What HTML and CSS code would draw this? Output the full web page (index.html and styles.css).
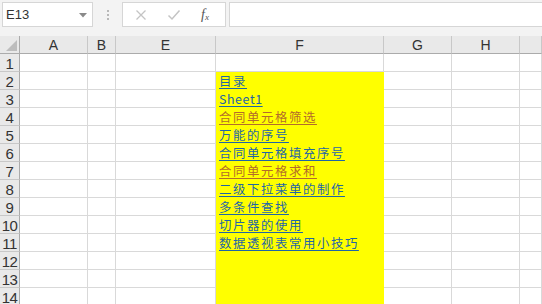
FILE: index.html
```html
<!DOCTYPE html>
<html lang="zh">
<head>
<meta charset="utf-8">
<link rel="stylesheet" href="styles.css">
</head>
<body>
<div class="app">
  <div class="toolbar">
    <div class="namebox">
      <span class="name">E13</span>
      <svg class="dd" width="8" height="5" viewBox="0 0 8 5"><path d="M0 0h8L4 4.5z" fill="#8a8a8a"/></svg>
    </div>
    <div class="grip"><i></i><i></i><i></i></div>
    <div class="fbtns">
      <svg class="fb" width="12" height="12" viewBox="0 0 12 12"><path d="M1.5 1.5l9 9M10.5 1.5l-9 9" stroke="#c4c4c4" stroke-width="1.3" fill="none"/></svg>
      <svg class="fb" width="14" height="12" viewBox="0 0 14 12"><path d="M1.5 6.5l3.5 3.5L12.5 1.5" stroke="#c4c4c4" stroke-width="1.5" fill="none"/></svg>
      <span class="fx">f<sub>x</sub></span>
    </div>
    <div class="finput"></div>
  </div>
  <div class="sheet">
    <div class="corner"><svg width="11" height="11" viewBox="0 0 11 11"><path d="M11 0V11H0z" fill="#bdbdbd"/></svg></div>
    <div class="ch">A</div><div class="ch">B</div><div class="ch">E</div><div class="ch">F</div><div class="ch">G</div><div class="ch">H</div><div class="ch"></div>

    <div class="rh">1</div><div class="c"></div><div class="c"></div><div class="c"></div><div class="c"></div><div class="c"></div><div class="c"></div><div class="c"></div>
    <div class="rh">2</div><div class="c"></div><div class="c"></div><div class="c"></div><div class="c y"><a class="lk">目录</a></div><div class="c"></div><div class="c"></div><div class="c"></div>
    <div class="rh">3</div><div class="c"></div><div class="c"></div><div class="c"></div><div class="c y"><a class="lk en">Sheet1</a></div><div class="c"></div><div class="c"></div><div class="c"></div>
    <div class="rh">4</div><div class="c"></div><div class="c"></div><div class="c"></div><div class="c y"><a class="lk v">合同单元格筛选</a></div><div class="c"></div><div class="c"></div><div class="c"></div>
    <div class="rh">5</div><div class="c"></div><div class="c"></div><div class="c"></div><div class="c y"><a class="lk">万能的序号</a></div><div class="c"></div><div class="c"></div><div class="c"></div>
    <div class="rh">6</div><div class="c"></div><div class="c"></div><div class="c"></div><div class="c y"><a class="lk">合同单元格填充序号</a></div><div class="c"></div><div class="c"></div><div class="c"></div>
    <div class="rh">7</div><div class="c"></div><div class="c"></div><div class="c"></div><div class="c y"><a class="lk v">合同单元格求和</a></div><div class="c"></div><div class="c"></div><div class="c"></div>
    <div class="rh">8</div><div class="c"></div><div class="c"></div><div class="c"></div><div class="c y"><a class="lk">二级下拉菜单的制作</a></div><div class="c"></div><div class="c"></div><div class="c"></div>
    <div class="rh">9</div><div class="c"></div><div class="c"></div><div class="c"></div><div class="c y"><a class="lk">多条件查找</a></div><div class="c"></div><div class="c"></div><div class="c"></div>
    <div class="rh">10</div><div class="c"></div><div class="c"></div><div class="c"></div><div class="c y"><a class="lk">切片器的使用</a></div><div class="c"></div><div class="c"></div><div class="c"></div>
    <div class="rh">11</div><div class="c"></div><div class="c"></div><div class="c"></div><div class="c y"><a class="lk">数据透视表常用小技巧</a></div><div class="c"></div><div class="c"></div><div class="c"></div>
    <div class="rh">12</div><div class="c"></div><div class="c"></div><div class="c"></div><div class="c y"></div><div class="c"></div><div class="c"></div><div class="c"></div>
    <div class="rh">13</div><div class="c"></div><div class="c"></div><div class="c"></div><div class="c y"></div><div class="c"></div><div class="c"></div><div class="c"></div>
    <div class="rh">14</div><div class="c"></div><div class="c"></div><div class="c"></div><div class="c y"></div><div class="c"></div><div class="c"></div><div class="c"></div>
  </div>
</div>
</body>
</html>
```

FILE: styles.css
```css
* { box-sizing: border-box; }
html, body { margin: 0; padding: 0; background: #ffffff; }
body { width: 542px; height: 304px; overflow: hidden; font-family: "Liberation Sans", "Noto Sans CJK SC", sans-serif; }
.app { width: 542px; height: 304px; overflow: hidden; background: #f3f3f3; }

.toolbar { height: 36px; display: flex; align-items: flex-start; padding-top: 2px; }
.namebox { margin-left: 2px; width: 91px; height: 25px; background: #fff; border: 1px solid #d6d6d6; display: flex; align-items: center; justify-content: space-between; padding: 0 5px 0 3px; }
.name { font-size: 13px; color: #333; }
.dd { margin-top: 1px; }
.grip { width: 29px; height: 25px; display: flex; flex-direction: column; align-items: center; justify-content: center; gap: 2px; }
.grip i { display: block; width: 2px; height: 2px; background: #b8b8b8; }
.fbtns { width: 104px; height: 25px; background: #fff; border: 1px solid #d6d6d6; display: flex; align-items: center; padding-left: 12px; }
.fbtns .fb:nth-child(1) { margin-right: 20px; }
.fbtns .fb:nth-child(2) { margin-right: 20px; }
.fx { font-family: "Liberation Serif", serif; font-style: italic; font-size: 14px; color: #555; line-height: 1; }
.fx sub { font-size: 9px; vertical-align: -1px; }
.finput { flex: 1; height: 25px; margin-left: 3px; background: #fff; border: 1px solid #d6d6d6; border-right: none; }

.sheet { display: grid; grid-template-columns: 20px 68px 28px 100px 168px 68px 68px 1fr; grid-auto-rows: 18px; background: #fff; }
.corner { background: #e9e9e9; border-right: 1px solid #ababab; border-bottom: 1px solid #ababab; display: flex; align-items: flex-end; justify-content: flex-end; padding: 0 2px 2px 0; }
.ch { background: #e9e9e9; border-right: 1px solid #c8c8c8; border-bottom: 1px solid #ababab; font-size: 14px; color: #333; display: flex; align-items: center; justify-content: center; line-height: 1; padding-top: 1px; }
.rh { background: #e9e9e9; border-right: 1px solid #ababab; border-bottom: 1px solid #c8c8c8; font-size: 15px; color: #333; display: flex; align-items: center; justify-content: center; line-height: 1; padding-top: 1px; letter-spacing: -0.5px; }
.c { border-right: 1px solid #d9d9d9; border-bottom: 1px solid #d9d9d9; background: #fff; }
.c.y { background: #ffff00; border-color: #ffff00; padding-left: 3px; display: flex; align-items: center; }
.lk { font-family: "Noto Sans CJK SC", "Liberation Sans", sans-serif; font-size: 12.4px; letter-spacing: 1.6px; color: #1f66a6; text-decoration: underline; text-underline-offset: 2px; white-space: nowrap; padding-top: 1px; }
.lk.en { letter-spacing: 0.6px; }
.lk.v { color: #b36c2a; }
```
